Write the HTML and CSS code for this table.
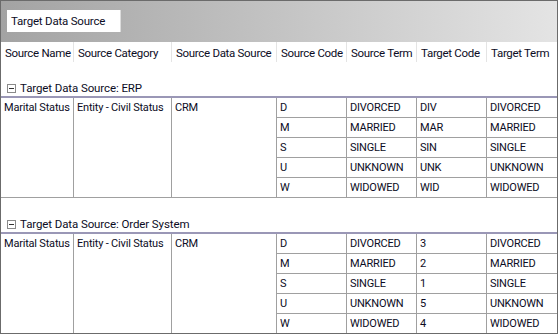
FILE: index.html
```html
<!DOCTYPE html>
<html lang="en">
<head>
    <meta charset="UTF-8">
    <title>Target Data Source</title>
    <link rel="stylesheet" href="styles.css">
</head>
<body>
    <div class="frame">
        <!-- grouping bar -->
        <div class="group-bar">
            <div class="group-tab">Target Data Source</div>
        </div>

        <!-- column headers -->
        <div class="grid header-row">
            <div class="hcell">Source Name</div>
            <div class="hcell">Source Category</div>
            <div class="hcell">Source Data Source</div>
            <div class="hcell">Source Code</div>
            <div class="hcell">Source Term</div>
            <div class="hcell">Target Code</div>
            <div class="hcell last">Target Term</div>
        </div>

        <!-- group: ERP -->
        <div class="group">
            <div class="group-label">
                <svg class="toggle" width="9" height="9" viewBox="0 0 9 9">
                    <rect x="0.5" y="0.5" width="8" height="8" fill="#fff" stroke="#8a8a8a"/>
                    <line x1="2" y1="4.5" x2="7" y2="4.5" stroke="#333"/>
                </svg>
                <span>Target Data Source: ERP</span>
            </div>
            <div class="grid rows">
                <div class="cell span">Marital Status</div>
                <div class="cell span">Entity - Civil Status</div>
                <div class="cell span">CRM</div>
                <div class="cell">D</div><div class="cell">DIVORCED</div><div class="cell">DIV</div><div class="cell last">DIVORCED</div>
                <div class="cell">M</div><div class="cell">MARRIED</div><div class="cell">MAR</div><div class="cell last">MARRIED</div>
                <div class="cell">S</div><div class="cell">SINGLE</div><div class="cell">SIN</div><div class="cell last">SINGLE</div>
                <div class="cell">U</div><div class="cell">UNKNOWN</div><div class="cell">UNK</div><div class="cell last">UNKNOWN</div>
                <div class="cell">W</div><div class="cell">WIDOWED</div><div class="cell">WID</div><div class="cell last">WIDOWED</div>
            </div>
        </div>

        <!-- group: Order System -->
        <div class="group">
            <div class="group-label">
                <svg class="toggle" width="9" height="9" viewBox="0 0 9 9">
                    <rect x="0.5" y="0.5" width="8" height="8" fill="#fff" stroke="#8a8a8a"/>
                    <line x1="2" y1="4.5" x2="7" y2="4.5" stroke="#333"/>
                </svg>
                <span>Target Data Source: Order System</span>
            </div>
            <div class="grid rows">
                <div class="cell span">Marital Status</div>
                <div class="cell span">Entity - Civil Status</div>
                <div class="cell span">CRM</div>
                <div class="cell">D</div><div class="cell">DIVORCED</div><div class="cell">3</div><div class="cell last">DIVORCED</div>
                <div class="cell">M</div><div class="cell">MARRIED</div><div class="cell">2</div><div class="cell last">MARRIED</div>
                <div class="cell">S</div><div class="cell">SINGLE</div><div class="cell">1</div><div class="cell last">SINGLE</div>
                <div class="cell">U</div><div class="cell">UNKNOWN</div><div class="cell">5</div><div class="cell last">UNKNOWN</div>
                <div class="cell">W</div><div class="cell">WIDOWED</div><div class="cell">4</div><div class="cell last">WIDOWED</div>
            </div>
        </div>
    </div>
</body>
</html>
```

FILE: styles.css
```css
* {
    margin: 0;
    padding: 0;
    box-sizing: border-box;
}

body {
    font-family: Roboto, 'Liberation Sans', Arial, sans-serif;
    font-size: 11px;
    color: #0c0c24;
    background: #fff;
}

.frame {
    width: 558px;
    height: 334px;
    border: 1px solid #6b6b6b;
    overflow: hidden;
}

/* grouping bar */
.group-bar {
    height: 41px;
    padding: 9px 0 0 6px;
    background: linear-gradient(to right, #a3a3a3, #e4e4e4);
}

.group-tab {
    display: inline-block;
    width: 114px;
    height: 22px;
    line-height: 22px;
    padding-left: 4px;
    background: #fff;
    border-right: 1px solid #dcdcdc;
    font-size: 11.5px;
    letter-spacing: -0.2px;
}

/* shared column layout */
.grid {
    display: grid;
    grid-template-columns: 73px 98px 105px 70px 70px 70px 70px;
}

.header-row {
    height: 20px;
}

.hcell {
    padding: 1px 0 0 4px;
    line-height: 20px;
    border-right: 1px solid #e4e4e4;
    white-space: nowrap;
    overflow: hidden;
    font-size: 11.5px;
    letter-spacing: -0.3px;
}

.hcell.last {
    border-right: none;
}

/* groups */
.group-label {
    height: 34px;
    padding: 16px 0 0 6px;
    display: flex;
    align-items: center;
    gap: 4px;
    font-size: 11.5px;
    letter-spacing: -0.1px;
}

.toggle {
    display: block;
    margin-top: 2px;
}

.group-label span {
    line-height: 18px;
    padding-top: 2px;
}

.rows {
    grid-auto-rows: 20px;
    border-top: 2px solid #9a97b6;
}

.cell {
    padding-left: 3px;
    line-height: 19px;
    border-right: 1px solid #a0a0a0;
    border-bottom: 1px solid #a0a0a0;
    white-space: nowrap;
    overflow: hidden;
    letter-spacing: -0.2px;
}

.cell.span {
    grid-row: span 5;
}

.cell.last {
    border-right: none;
}
```
